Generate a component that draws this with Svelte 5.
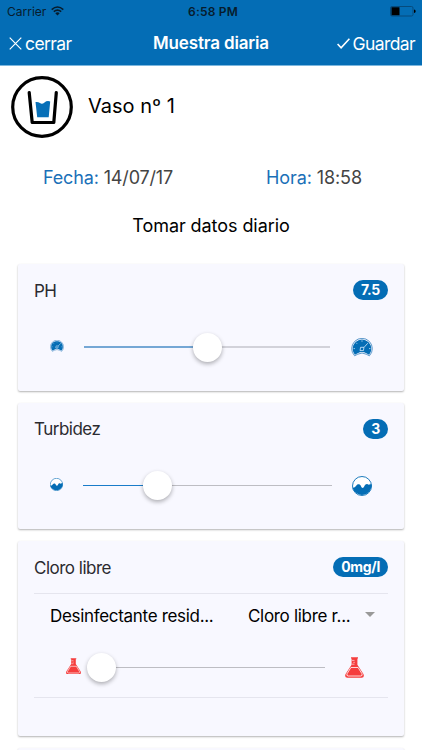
<script lang="ts">
	let ph = $state(50);
	let turbidity = $state(30);
	let chlorine = $state(0);
</script>

{#snippet gauge()}
	<svg class="icon" viewBox="0 0 22 19">
		<path class="rim" d="M3.600 17.800A10.300 10.300 0 1 1 18.400 17.800L15.200 16.200Q11 13.800 6.800 16.200Z" />
		<path class="fill" d="M3.900 16.700A9.300 9.300 0 1 1 18.100 16.700L15.400 15.200Q11 12.700 6.600 15.200Z" />
		<path class="tick" d="M11 2.400v1.300M5.200 4.800l.8.900M2.600 10.600h1.300M19.400 10.600h-1.300M13 9.400L16.800 5.200" />
		<path class="tick" d="M9.600 9.300h3.400l-.6 3.300H9Z" />
	</svg>
{/snippet}

{#snippet wave()}
	<svg class="icon" viewBox="0 0 20 20">
		<circle cx="10" cy="10" r="9.500" fill="#fff" stroke="#046db5" stroke-width=".9" />
		<path class="fill" d="M.5 11.800C2.500 12.100 3.400 10.900 4.400 9.600C5.500 7.800 8 7.800 9 10.200C9.800 12.500 11.400 12.500 12.300 10.200C13.600 7.300 15.500 7.500 16.700 8.800C17.400 8.100 18.500 7.900 19.700 8.600A9.800 9.800 0 0 1 .5 11.800Z" />
	</svg>
{/snippet}

{#snippet flask()}
	<svg class="icon" viewBox="0 0 19 21">
		<path fill="#f53d3d" d="M6 .3h7v1.300h-.6v6.100l6 9.200q1.500 3.600-1.800 3.900H2.400Q-.9 20.500 .6 16.900l6-9.200V1.600H6Z" />
		<path fill="none" stroke="#fff" stroke-width=".8" d="M5.900 10.500h7.200l3.900 6.300q.8 2-1.200 2.200H3.200q-2-.2-1.200-2.200Z" />
		<path stroke="#fff" stroke-width=".6" d="M7 3.400h2.500M8.300 5.300h1.500M7 7.200h2.500" />
	</svg>
{/snippet}

{#snippet slider(value: number)}
	<div class="track">
		<div class="active" style="width: {value}%"></div>
		<div class="knob" style="left: {value}%"></div>
	</div>
{/snippet}

<div class="app">
	<header>
		<div class="status">
			<div class="carrier">
				<span>Carrier</span>
				<svg width="13" height="10" viewBox="0 0 13 10" fill="none" stroke="#071c2d" stroke-width="1.600">
					<path d="M.7 3.600Q6.500-1.600 12.300 3.600M2.800 5.700Q6.500 2.500 10.200 5.700" />
					<path fill="#071c2d" stroke="none" d="M4.300 7.200Q6.500 5.400 8.700 7.200L6.500 9.500Z" />
				</svg>
			</div>
			<span class="clock">6:58 PM</span>
			<svg class="battery" width="26" height="11" viewBox="0 0 26 11">
				<rect x=".5" y=".5" width="22.500" height="9.500" rx="1.500" fill="none" stroke="#064b7c" />
				<path fill="#000" d="M1.500 1.300h8v8h-8ZM24 3.500q1.700.2 1.700 1.800T24 7.100Z" />
			</svg>
		</div>
		<nav>
			<div class="action">
				<svg width="13" height="13" viewBox="0 0 13 13" fill="none" stroke="#fff" stroke-width="1.200">
					<path d="M.7.700l11.600 11.600M12.300.700L.7 12.300" />
				</svg>
				<span>cerrar</span>
			</div>
			<h1>Muestra diaria</h1>
			<div class="action end">
				<svg width="13" height="11" viewBox="0 0 13 11" fill="none" stroke="#fff" stroke-width="1.600">
					<path d="M.6 6l3.500 3.800L12.400.700" />
				</svg>
				<span>Guardar</span>
			</div>
		</nav>
	</header>

	<div class="pool">
		<svg width="62" height="62" viewBox="0 0 62 62">
			<circle cx="31" cy="31" r="29.300" fill="none" stroke="#000" stroke-width="3.200" />
			<path d="M18.200 16.500L21.200 46.500H42.800L45.300 16.500" fill="none" stroke="#000" stroke-width="3.200" stroke-linecap="round" stroke-linejoin="round" />
			<path fill="#0870b8" d="M24.500 26q2.500-.5 4.500 1t4.500-.6 5.700-1L37.700 41.300H26.200Z" />
		</svg>
		<span>Vaso n<span class="ordinal">º</span> 1</span>
	</div>

	<div class="when">
		<div class="date"><b>Fecha:</b> 14/07/17</div>
		<div class="time"><b>Hora:</b> 18:58</div>
	</div>

	<h2>Tomar datos diario</h2>

	<main>
		<section class="card">
			<div class="head">
				<span>PH</span>
				<span class="badge">7.5</span>
			</div>
			<div class="range ph-range">
				<div class="small">{@render gauge()}</div>
				{@render slider(ph)}
				<div class="large">{@render gauge()}</div>
			</div>
		</section>

		<section class="card">
			<div class="head">
				<span>Turbidez</span>
				<span class="badge">3</span>
			</div>
			<div class="range turbidity-range">
				<div class="small">{@render wave()}</div>
				{@render slider(turbidity)}
				<div class="large">{@render wave()}</div>
			</div>
		</section>

		<section class="card tall">
			<div class="head">
				<span>Cloro libre</span>
				<span class="badge">0mg/l</span>
			</div>
			<div class="box">
				<div class="select">
					<span class="label">Desinfectante resid...</span>
					<span class="value">Cloro libre r...</span>
					<i class="arrow"></i>
				</div>
				<div class="range chlorine-range">
					<div class="small">{@render flask()}</div>
					{@render slider(chlorine)}
					<div class="large">{@render flask()}</div>
				</div>
			</div>
		</section>

		<section class="card"></section>
	</main>
</div>

<style>
	:global(body) {
		background: #fff;
		overflow: hidden;
	}

	.app {
		width: 422px;
		height: 750px;
		overflow: hidden;
		background: #fff;
		color: #000;
		font-family: Inter, 'Liberation Sans', sans-serif;
		font-size: 18px;
	}

	header {
		box-sizing: border-box;
		height: 66px;
		background: #046db5;
		border-bottom: 1px solid #7cb7de;
	}

	.status {
		display: grid;
		grid-template-columns: 1fr auto 1fr;
		align-items: center;
		height: 22px;
		padding: 0 6px 0 7px;
		font-size: 12px;
		color: #071c2d;
	}

	.carrier {
		display: flex;
		align-items: center;
		gap: 5px;
	}

	.clock {
		font-weight: 600;
		letter-spacing: 0.2px;
		padding-left: 3px;
	}

	.battery {
		justify-self: end;
	}

	nav {
		display: grid;
		grid-template-columns: 1fr auto 1fr;
		align-items: center;
		height: 42px;
		padding: 0 7px 0 9px;
		color: #fff;
	}

	h1 {
		margin: 0 2px 0 0;
		font-size: 17px;
		font-weight: 600;
		letter-spacing: -0.15px;
	}

	.action {
		display: flex;
		align-items: center;
		gap: 3px;
		font-size: 17.5px;
		letter-spacing: -0.6px;
	}

	.end {
		justify-content: flex-end;
	}

	.pool {
		display: flex;
		align-items: center;
		gap: 15px;
		height: 82px;
		padding-left: 11px;
		font-size: 20px;
	}

	.pool span {
		margin-top: -2px;
	}

	.ordinal {
		font-family: Roboto, sans-serif;
	}

	.when {
		display: flex;
		height: 58px;
		align-items: center;
		color: #444;
		letter-spacing: -0.15px;
	}

	.when b {
		font-weight: 400;
		color: #1a70b8;
	}

	.date {
		width: 222px;
		padding-left: 43px;
	}

	.time {
		padding-left: 1px;
		letter-spacing: -0.1px;
	}

	h2 {
		margin: 0;
		height: 58px;
		padding-top: 9px;
		box-sizing: border-box;
		text-align: center;
		font-size: 18px;
		font-weight: 400;
		letter-spacing: -0.07px;
	}

	main {
		display: flex;
		flex-direction: column;
		gap: 12px;
		padding: 0 17.5px;
	}

	.card {
		flex-shrink: 0;
		box-sizing: border-box;
		width: 386.9px;
		height: 126.5px;
		padding: 0 16.4px 0 16.5px;
		border-radius: 2px;
		background: #f8f8ff;
		box-shadow: 0 1px 2px rgba(0, 0, 0, 0.3);
	}

	.tall {
		height: 195px;
	}

	.head {
		display: flex;
		align-items: center;
		justify-content: space-between;
		height: 53px;
		color: #2b2b30;
		font-size: 17px;
		letter-spacing: -0.5px;
	}

	.badge {
		box-sizing: border-box;
		height: 20px;
		margin-top: -1px;
		padding: 0 8px;
		border-radius: 10px;
		background: #046db5;
		color: #fff;
		font-size: 14px;
		font-weight: 700;
		letter-spacing: -0.3px;
		line-height: 20px;
	}

	.range {
		display: flex;
		align-items: center;
		height: 60px;
	}

	.small,
	.large {
		flex-shrink: 0;
	}

	.icon {
		display: block;
		width: 100%;
	}

	.rim {
		fill: #f8f8ff;
		stroke: #337fbd;
		stroke-width: 0.8;
	}

	.fill {
		fill: #046db5;
	}

	.tick {
		fill: none;
		stroke: #d9edff;
		stroke-width: 0.8;
	}

	.track {
		position: relative;
		flex: 1;
		height: 1px;
		background: #bdbdc3;
	}

	.active {
		height: 1px;
		background: #1a7cc9;
	}

	.knob {
		position: absolute;
		top: 50%;
		left: 0;
		width: 29px;
		height: 29px;
		margin: -14.5px 0 0 -14.5px;
		border-radius: 50%;
		background: #fff;
		box-shadow: 0 2px 4px rgba(0, 0, 0, 0.3);
	}

	.ph-range {
		padding: 0 15px 0 16px;
	}

	.ph-range .track {
		height: 2px;
		background: #d2d2da;
	}

	.ph-range .active {
		height: 2px;
		background: #75a7d5;
	}

	.ph-range .small {
		width: 14px;
		margin: -2px 20px 0 0;
	}

	.ph-range .large {
		width: 22px;
		margin-left: 21px;
	}

	.turbidity-range {
		padding: 0 16px;
	}

	.turbidity-range .small {
		width: 13px;
		margin: -3px 20px 0 0;
	}

	.turbidity-range .large {
		width: 20px;
		margin-left: 20px;
	}

	.box {
		box-sizing: border-box;
		height: 105px;
		margin-top: -1px;
		border-top: 1px solid #e5e5ee;
		border-bottom: 1px solid #e5e5ee;
	}

	.select {
		display: flex;
		align-items: center;
		height: 44px;
		padding-left: 16px;
		font-size: 17px;
		letter-spacing: -0.31px;
		white-space: nowrap;
	}

	.label {
		width: 198px;
	}

	.value {
		width: 117px;
	}

	.arrow {
		margin-top: -4px;
		border: 5px solid transparent;
		border-top-color: #999;
		border-bottom: 0;
	}

	.chlorine-range {
		height: 59px;
		padding: 0 24px 0 32px;
	}

	.chlorine-range .small {
		width: 15px;
		margin: -3px 20px 0 0;
	}

	.chlorine-range .large {
		width: 19px;
		margin-left: 20px;
	}
</style>
